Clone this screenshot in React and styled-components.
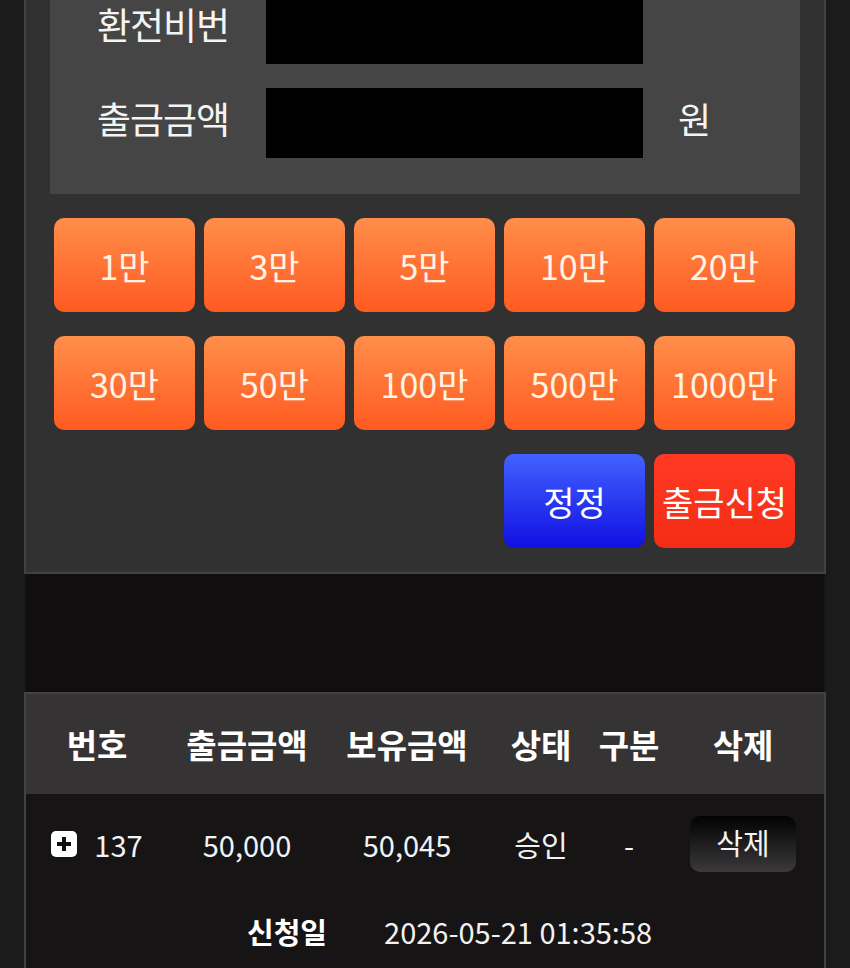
import React from "react";
import styled, { createGlobalStyle } from "styled-components";

const GlobalStyle = createGlobalStyle`
  html, body {
    margin: 0;
    padding: 0;
    background: #1c1b1c;
    font-family: "Noto Sans CJK KR", "Noto Sans", sans-serif;
    color: #fff;
    overflow: hidden;
  }
`;

const amounts = ["1만", "3만", "5만", "10만", "20만", "30만", "50만", "100만", "500만", "1000만"];

const rows = [
  { no: 137, out: "50,000", hold: "50,045", status: "승인", kind: "-", date: "2026-05-21 01:35:58" },
];

function App() {
  return (
    <>
      <GlobalStyle />
      <Page>
        <Panel>
          <FormBox>
            <FormRow>
              <Label>환전비번</Label>
              <Field />
            </FormRow>
            <FormRow>
              <Label>출금금액</Label>
              <Field />
              <Unit>원</Unit>
            </FormRow>
          </FormBox>
          <ButtonGrid>
            {amounts.map((a) => (
              <AmountButton key={a}>{a}</AmountButton>
            ))}
            <ActionButton $variant="blue" $col={4}>
              정정
            </ActionButton>
            <ActionButton $variant="red" $col={5}>
              출금신청
            </ActionButton>
          </ButtonGrid>
        </Panel>
        <Spacer />
        <Table>
          <HeadRow>
            <Cell>번호</Cell>
            <Cell>출금금액</Cell>
            <Cell>보유금액</Cell>
            <Cell>상태</Cell>
            <Cell>구분</Cell>
            <Cell>삭제</Cell>
          </HeadRow>
          {rows.map((r) => (
            <Body key={r.no}>
              <DataRow>
                <Cell>
                  <NoWrap>
                    <PlusIcon viewBox="0 0 26 26">
                      <rect x="0" y="0" width="26" height="26" rx="5" fill="#fff" />
                      <path d="M13 6v14M6 13h14" stroke="#111" strokeWidth="4" />
                    </PlusIcon>
                    {r.no}
                  </NoWrap>
                </Cell>
                <Cell>{r.out}</Cell>
                <Cell>{r.hold}</Cell>
                <Cell>{r.status}</Cell>
                <Cell>{r.kind}</Cell>
                <Cell>
                  <DeleteButton>삭제</DeleteButton>
                </Cell>
              </DataRow>
              <DetailRow>
                <DetailLabel>신청일</DetailLabel>
                <span>{r.date}</span>
              </DetailRow>
            </Body>
          ))}
        </Table>
      </Page>
    </>
  );
}

const Page = styled.div`
  margin: 0 24px;
  width: 802px;
`;

const Panel = styled.div`
  background: #323132;
  border: 2px solid #434243;
  border-top: none;
  padding: 0 28px 24px;
`;

const FormBox = styled.div`
  margin: -6px -4px 0 -4px;
  background: #454545;
  padding: 0 0 36px 47px;
  display: flex;
  flex-direction: column;
  gap: 24px;
`;

const FormRow = styled.div`
  display: flex;
  align-items: center;
  height: 70px;
`;

const Label = styled.div`
  width: 169px;
  font-size: 37px;
  letter-spacing: -1px;
  color: #f4f4f4;
  line-height: 1;
  padding-bottom: 10px;
`;

const Field = styled.div`
  width: 377px;
  height: 70px;
  background: #000;
`;

const Unit = styled.div`
  margin-left: 35px;
  font-size: 36px;
  color: #f4f4f4;
  line-height: 1;
  padding-bottom: 10px;
`;

const ButtonGrid = styled.div`
  margin-top: 24px;
  display: grid;
  grid-template-columns: repeat(5, 141px);
  column-gap: 9px;
  row-gap: 24px;
`;

const ButtonBase = styled.button`
  height: 94px;
  border: none;
  border-radius: 10px;
  padding: 0;
  font-family: "Noto Sans CJK KR", sans-serif;
  font-size: 34px;
  color: #fff4e6;
  display: flex;
  align-items: center;
  justify-content: center;
  white-space: nowrap;
`;

const AmountButton = styled(ButtonBase)`
  background: linear-gradient(#ff8e4a, #ff5a21);
`;

const ActionButton = styled(ButtonBase)`
  grid-column: ${(p) => p.$col};
  color: #fff;
  background: ${(p) =>
    p.$variant === "blue"
      ? "linear-gradient(#4262ff, #1010e2)"
      : "linear-gradient(#ff3a24, #f42c14)"};
`;

const Spacer = styled.div`
  height: 118px;
  background: #100e0f;
  border-left: 2px solid #181718;
  border-right: 2px solid #181718;
`;

const Table = styled.div`
  border: 2px solid #434243;
  border-bottom: none;
`;

const Columns = styled.div`
  display: grid;
  grid-template-columns: 142px 158px 162px 106px 70px 158px;
  align-items: center;
  justify-items: center;
`;

const HeadRow = styled(Columns)`
  height: 100px;
  background: #363335;
  font-size: 33px;
  font-weight: 700;
  color: #fff;
`;

const Body = styled.div`
  background: #161415;
`;

const DataRow = styled(Columns)`
  height: 100px;
  font-size: 29px;
  color: #f2f2f2;
`;

const Cell = styled.div`
  display: flex;
  align-items: center;
  justify-content: center;
  line-height: 1;
  white-space: nowrap;
`;

const NoWrap = styled.span`
  display: flex;
  align-items: center;
  gap: 17px;
`;

const PlusIcon = styled.svg`
  width: 26px;
  height: 26px;
`;

const DeleteButton = styled.button`
  width: 106px;
  height: 56px;
  border: none;
  border-radius: 10px;
  background: linear-gradient(#030203, #3b393b);
  font-family: "Noto Sans CJK KR", sans-serif;
  font-size: 29px;
  color: #f4f4f4;
  padding: 0 0 4px;
`;

const DetailRow = styled.div`
  height: 74px;
  display: flex;
  align-items: center;
  padding-left: 221px;
  gap: 57px;
  font-size: 29px;
  color: #f2f2f2;
  line-height: 1;
`;

const DetailLabel = styled.span`
  font-weight: 700;
  color: #fff;
`;

export default App;
